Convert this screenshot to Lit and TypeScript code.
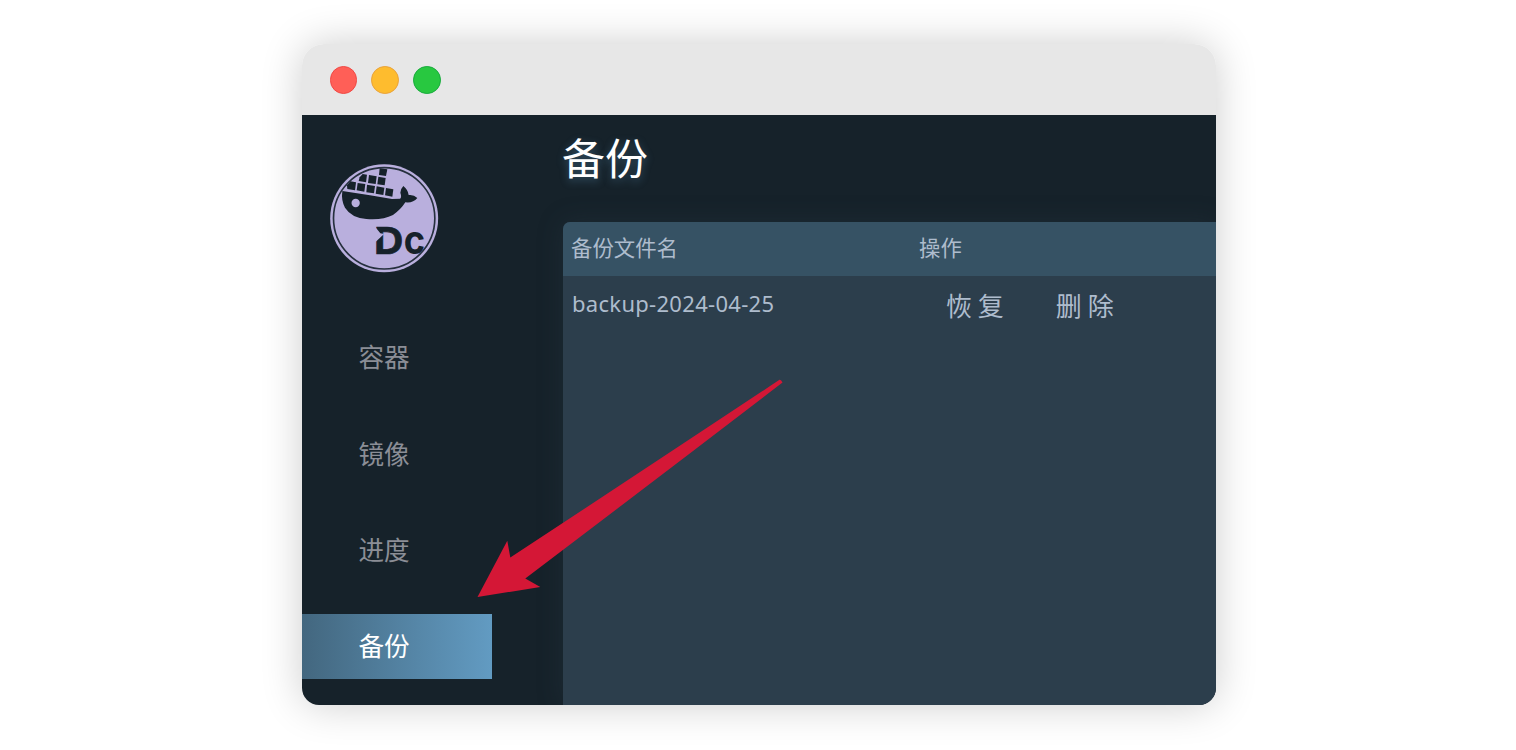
import { LitElement, html, css } from "lit";
import { customElement, property } from "lit/decorators.js";

@customElement("dc-logo")
class DcLogo extends LitElement {
  static styles = css`
    :host { display: block; width: 130px; height: 130px; }
    svg { display: block; }
    .letter { font-family: "Inter", "Liberation Sans", sans-serif; font-weight: 700; }
  `;
  render() {
    return html`<svg width="130" height="130" viewBox="0 0 390 390">
      <circle cx="192.500" cy="190" r="162" fill="#b9afdd" />
      <circle cx="192.500" cy="190" r="152" fill="none" stroke="#26303e" stroke-width="5" />
      <g fill="#16222a">
        <path d="M67 108 L150 121 L216 132 L240 131 Q246 127 241 113 Q242 101 250 93 Q264 104 266 120 Q281 118 292 129 Q279 145 256 142 Q243 163 219 180 Q188 196 139 192 Q94 188 75 158 Q63 136 67 108Z" />
        <path d="M179 40 L202 43 L198 63 L177 60Z" />
        <path d="M119 67 L128 57 L141 59 L138 82 L116 78Z" />
        <path d="M147 60 L170 64 L167 87 L144 84Z" />
        <path d="M175 65 L197 69 L194 91 L172 88Z" />
        <path d="M81 91 L91 79 L108 82 L105 106 L82 102Z" />
        <path d="M113 84 L136 87 L133 110 L110 106Z" />
        <path d="M141 89 L165 93 L162 115 L139 112Z" />
        <path d="M170 94 L193 98 L190 120 L167 116Z" />
        <path d="M198 99 L220 103 L217 125 L195 121Z" />
        <text class="letter" x="162" y="298" font-size="112" stroke="#16222a" stroke-width="2" textLength="88" lengthAdjust="spacingAndGlyphs">D</text>
        <text class="letter" x="251" y="296" font-size="118" textLength="64" lengthAdjust="spacingAndGlyphs">c</text>
      </g>
      <circle cx="107" cy="144" r="12.500" fill="#b9afdd" />
      <path d="M164 214 L181 235 L192 237 L169 259 L164 262Z" fill="#b9afdd" />
    </svg>`;
  }
}

@customElement("nav-item")
class NavItem extends LitElement {
  @property() label = "";
  @property({ type: Boolean, reflect: true }) active = false;
  static styles = css`
    :host { display: flex; align-items: center; box-sizing: border-box; width: 190px; height: 65px; padding: 0 0 2px 56.500px;
      font-size: 25.600px; line-height: 36px; color: #8b8e96; }
    :host([active]) { color: #fff; background: linear-gradient(90deg, #43677f, #629bc2); }
  `;
  render() { return html`<span>${this.label}</span>`; }
}

@customElement("app-root")
class AppRoot extends LitElement {
  static styles = css`
    :host { display: block; position: relative; box-sizing: border-box; width: 1516px; height: 750px; padding: 44px 300px 45px 302px;
      background: #fff; overflow: hidden; font-family: "Noto Sans CJK SC", sans-serif; }
    .window { display: flex; flex-direction: column; width: 914px; height: 661px; border-radius: 22px 22px 17px 17px;
      box-shadow: 0 0 42px rgba(0,0,0,.2); }
    .bar { display: flex; align-items: center; gap: 14px; box-sizing: border-box; height: 71px; padding: 1px 0 0 27.600px; background: #e7e7e7;
      border-radius: 22px 22px 0 0; flex: none; }
    .dot { box-sizing: border-box; width: 27.700px; height: 27.700px; border-radius: 50%; border: 1px solid; }
    .red { background: #ff5f57; border-color: #f04844; }
    .yellow { background: #febc2e; border-color: #e9a23b; }
    .green { background: #28c840; border-color: #17ab3c; }
    .body { display: flex; flex: 1; min-height: 0; overflow: hidden; background: #16222a; border-radius: 0 0 17px 17px; }
    .side { width: 261px; flex: none; }
    .logo { margin: 40px 0 0 18px; }
    nav { display: flex; flex-direction: column; gap: 31.400px; margin-top: 39.800px; }
    main { flex: 1; min-width: 0; display: flex; flex-direction: column; }
    h1 { margin: 0; height: 107px; box-sizing: border-box; padding-top: 9px; margin-left: -1px; font-size: 43px; line-height: 64px; font-weight: 400; color: #fff;
      text-shadow: 0 3px 8px rgba(98,155,194,.4); }
    .table { flex: 1; background: #2c3e4c; border-radius: 7px 0 0 0; overflow: hidden; color: #aebccd; box-shadow: 0 0 26px rgba(45,62,76,.3); }
    .row { display: grid; grid-template-columns: 356px 1fr; align-items: center; }
    .head { height: 54px; background: #365264; font-size: 21.400px; }
    .head span { padding: 0 0 4px 8px; line-height: 30px; }
    .head .ops { padding-left: 0; }
    .data { height: 60px; }
    .name { padding: 0 0 6px 9px; font-family: "Noto Sans", sans-serif; font-size: 22px; letter-spacing: .3px; }
    .actions { display: flex; gap: 52px; padding: 0 0 3px 27px; font-size: 26px; }
    .arrow { position: absolute; left: 460px; top: 360px; }
  `;
  render() {
    return html`
      <div class="window">
        <div class="bar"><i class="dot red"></i><i class="dot yellow"></i><i class="dot green"></i></div>
        <div class="body">
          <div class="side">
            <dc-logo class="logo"></dc-logo>
            <nav>
              ${["容器", "镜像", "进度", "备份"].map((t) => html`<nav-item .label=${t} ?active=${t === "备份"}></nav-item>`)}
            </nav>
          </div>
          <main>
            <h1>备份</h1>
            <div class="table">
              <div class="row head"><span>备份文件名</span><span class="ops">操作</span></div>
              <div class="row data">
                <span class="name">backup-2024-04-25</span>
                <div class="actions"><span>恢 复</span><span>删 除</span></div>
              </div>
            </div>
          </main>
        </div>
      </div>
      <svg class="arrow" width="340" height="250" viewBox="0 0 340 250">
        <path d="M17.500 237 L47.300 180.700 L50.300 197.500 Q185 109 319.500 19.800 Q321 19.300 322.500 22.500 Q194 121 65.300 218.500 L80.300 227Z" fill="#d41736" />
      </svg>`;
  }
}
